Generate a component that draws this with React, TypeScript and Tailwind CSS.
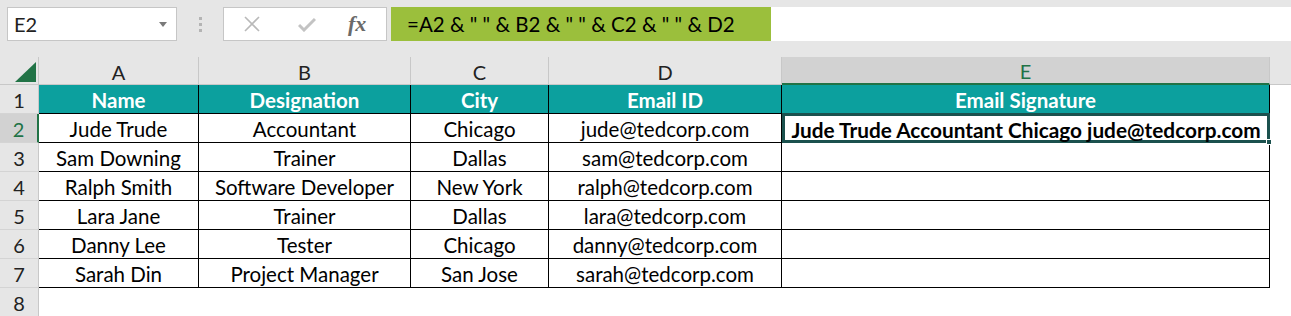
import React from "react";

const font = { fontFamily: "Lato, 'Open Sans', sans-serif" };

const widths = ["w-[160px]", "w-[212px]", "w-[138px]", "w-[233px]", "w-[488px]"];
const letters = ["A", "B", "C", "D", "E"];
const headers = ["Name", "Designation", "City", "Email ID", "Email Signature"];
const rows = [
  ["Jude Trude", "Accountant", "Chicago", "jude@tedcorp.com", "Jude Trude Accountant Chicago jude@tedcorp.com"],
  ["Sam Downing", "Trainer", "Dallas", "sam@tedcorp.com", ""],
  ["Ralph Smith", "Software Developer", "New York", "ralph@tedcorp.com", ""],
  ["Lara Jane", "Trainer", "Dallas", "lara@tedcorp.com", ""],
  ["Danny Lee", "Tester", "Chicago", "danny@tedcorp.com", ""],
  ["Sarah Din", "Project Manager", "San Jose", "sarah@tedcorp.com", ""],
];

function RowHeader({ n, selected }: { n: number; selected?: boolean }) {
  return (
    <div
      className={
        "w-[39px] h-full flex items-center justify-center pt-[2px] border-b border-[#d4d4d4] text-[20px] " +
        (selected
          ? "bg-[#d2d2d2] text-[#217346] border-r-2 border-r-[#217346]"
          : "bg-[#e6e6e6] text-[#222] border-r border-r-[#c8c8c8]")
      }
    >
      {n}
    </div>
  );
}

function Cell({ w, text, selected }: { w: string; text: string; selected?: boolean }) {
  if (selected) {
    return (
      <div
        className={
          w +
          " h-[30px] -mt-[1px] relative z-10 border-[3px] border-[#1b514e] flex items-center justify-center pt-[3px] text-[20.8px] font-bold whitespace-nowrap"
        }
      >
        {text}
        <span className="absolute -right-[5px] -bottom-[5px] w-[6px] h-[6px] bg-[#1b514e] border border-white" />
      </div>
    );
  }
  return (
    <div
      className={
        w +
        " h-full border-r border-b border-black flex items-center justify-center pt-[3px] text-[20.5px] whitespace-nowrap"
      }
    >
      {text}
    </div>
  );
}

export default function App() {
  return (
    <div className="w-[1291px] h-[316px] bg-white overflow-hidden text-black" style={font}>
      {/* Formula bar */}
      <div className="h-[57px] bg-[#e6e6e6] flex items-start pt-[7px]">
        <div className="ml-[7px] w-[170px] h-[34px] bg-white border border-[#c6c6c6] flex items-center justify-between pl-[6px] pr-[9px]">
          <span className="text-[20px] text-[#222]">E2</span>
          <svg width="8" height="5" viewBox="0 0 8 5">
            <polygon points="0,0 8,0 4,5" fill="#7a7a7a" />
          </svg>
        </div>
        <div className="w-[46px] h-[34px] flex flex-col items-center justify-center gap-[3px]">
          <div className="w-[3px] h-[3px] bg-[#b4b4b4]" />
          <div className="w-[3px] h-[3px] bg-[#b4b4b4]" />
          <div className="w-[3px] h-[3px] bg-[#b4b4b4]" />
        </div>
        <div className="w-[164px] h-[34px] bg-white border border-[#c6c6c6] flex items-center">
          <svg className="ml-[20px]" width="16" height="16" viewBox="0 0 16 16">
            <path d="M1 1 L15 15 M15 1 L1 15" stroke="#b9b9b9" strokeWidth="1.6" />
          </svg>
          <svg className="ml-[38px]" width="18" height="15" viewBox="0 0 18 15">
            <path d="M1 8 L6 13 L17 2" stroke="#c3c3c3" strokeWidth="3" fill="none" />
          </svg>
          <span
            className="ml-[32px] text-[22px] italic font-bold text-[#6a6a6a] leading-none"
            style={{ fontFamily: "'Liberation Serif', serif" }}
          >
            fx
          </span>
        </div>
        <div className="ml-[4px] w-[380px] h-[34px] bg-[#9bbf3c] flex items-center pl-[16px] pt-[1px] text-[20.5px] text-black whitespace-pre">
          =A2 &amp; " " &amp; B2 &amp; " " &amp; C2 &amp; " " &amp; D2
        </div>
        <div className="flex-1 h-[34px] bg-white" />
      </div>

      {/* Column headers */}
      <div className="h-[28px] flex bg-[#e6e6e6] border-b border-[#c8c8c8]">
        <div className="w-[39px] h-full relative border-r border-[#c8c8c8]">
          <svg className="absolute left-[15px] top-[5px]" width="21" height="20" viewBox="0 0 21 20">
            <polygon points="21,0 21,20 0,20" fill="#217346" />
          </svg>
        </div>
        {letters.map((l, i) =>
          i === 4 ? (
            <div
              key={l}
              className={widths[i] + " h-[28px] -mb-[1px] bg-[#d2d2d2] border-b-2 border-[#217346] border-r border-r-[#c8c8c8] flex items-center justify-center pt-[2px] text-[20px] text-[#217346]"}
            >
              {l}
            </div>
          ) : (
            <div
              key={l}
              className={widths[i] + " h-full border-r border-[#c8c8c8] flex items-center justify-center pt-[2px] text-[20px] text-[#222]"}
            >
              {l}
            </div>
          )
        )}
      </div>

      {/* Row 1 */}
      <div className="h-[29px] flex">
        <RowHeader n={1} />
        {headers.map((h, i) => (
          <div
            key={h}
            className={widths[i] + " h-full bg-[#0ca09e] border-r border-b border-black flex items-center justify-center pt-[2px] text-white font-bold text-[20.5px]"}
          >
            {h}
          </div>
        ))}
      </div>

      {/* Data rows */}
      {rows.map((r, ri) => (
        <div key={ri} className="h-[29px] flex">
          <RowHeader n={ri + 2} selected={ri === 0} />
          {r.map((c, ci) => (
            <Cell key={ci} w={widths[ci]} text={c} selected={ci === 4 && ri === 0} />
          ))}
        </div>
      ))}

      {/* Row 8 */}
      <div className="h-[29px] flex">
        <RowHeader n={8} />
        <div className="flex-1" />
      </div>
    </div>
  );
}
